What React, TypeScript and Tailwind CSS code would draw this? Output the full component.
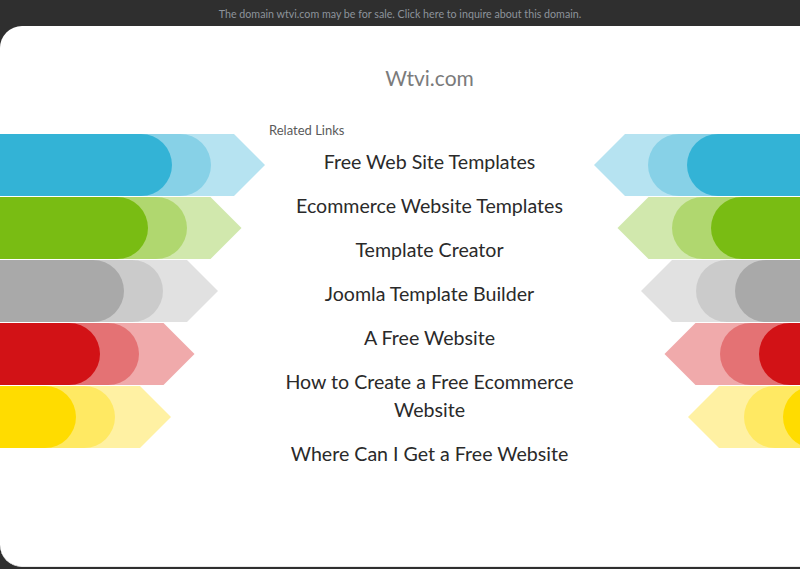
import React from "react";

type Band = { dark: string; mid: string; light: string };

const bands: Band[] = [
  { dark: "#33b3d6", mid: "#87d1e7", light: "#b6e3f1" },
  { dark: "#79bc13", mid: "#b0d76f", light: "#d1e8ad" },
  { dark: "#a9a9a9", mid: "#cbcbcb", light: "#e1e1e1" },
  { dark: "#d21216", mid: "#e47274", light: "#f0aaab" },
  { dark: "#ffdc00", mid: "#ffe963", light: "#fff1a3" },
];

const links = [
  "Free Web Site Templates",
  "Ecommerce Website Templates",
  "Template Creator",
  "Joomla Template Builder",
  "A Free Website",
  "How to Create a Free Ecommerce Website",
  "Where Can I Get a Free Website",
];

const H = 62;
const R = 31;

// pill ending (left side) with rounded right end at x
const pillRight = (x: number) => `M0 0 H${x - R} A${R} ${R} 0 0 1 ${x - R} ${H} H0 Z`;
// pill starting (right side) with rounded left end at x, running to w
const pillLeft = (x: number, w: number) => `M${w} 0 H${x + R} A${R} ${R} 0 0 0 ${x + R} ${H} H${w} Z`;

const LeftArrow: React.FC<{ band: Band; i: number }> = ({ band, i }) => {
  const tip = 265 - 23.5 * i;
  const mid = 211 - 24 * i;
  const dark = 172 - 24 * i;
  return (
    <svg width="265" height={H} viewBox={`0 0 265 ${H}`} className="block">
      <polygon points={`0,0 ${tip - R},0 ${tip},${R} ${tip - R},${H} 0,${H}`} fill={band.light} />
      <path d={pillRight(mid)} fill={band.mid} />
      <path d={pillRight(dark)} fill={band.dark} />
    </svg>
  );
};

const RightArrow: React.FC<{ band: Band; i: number }> = ({ band, i }) => {
  const w = 206;
  const tip = 23.5 * i;
  const mid = 54 + 24 * i;
  const dark = 93 + 24 * i;
  return (
    <svg width={w} height={H} viewBox={`0 0 ${w} ${H}`} className="block">
      <polygon points={`${w},0 ${tip + R},0 ${tip},${R} ${tip + R},${H} ${w},${H}`} fill={band.light} />
      <path d={pillLeft(mid, w)} fill={band.mid} />
      <path d={pillLeft(dark, w)} fill={band.dark} />
    </svg>
  );
};

export default function App() {
  return (
    <div
      className="w-[800px] h-[569px] bg-[#2f2f2f] flex flex-col overflow-hidden"
      style={{ fontFamily: "Lato, 'Open Sans', sans-serif" }}
    >
      {/* sale banner */}
      <div className="h-[26px] shrink-0 flex items-center justify-center text-[10.7px] text-[#8d939b] pt-[2px]">
        The domain wtvi.com may be for sale. Click here to inquire about this domain.
      </div>

      {/* main card */}
      <div className="h-[541px] bg-white rounded-l-[22px] flex overflow-hidden border-b border-[#e8e8e8]">
        {/* left arrows */}
        <div className="w-[265px] shrink-0 pt-[108px] flex flex-col gap-px">
          {bands.map((b, i) => (
            <LeftArrow key={i} band={b} i={i} />
          ))}
        </div>

        {/* center content */}
        <div className="flex-1 flex flex-col pt-[38px]">
          <h1 className="h-[28px] leading-[28px] text-[21px] text-[#7b7b7b] text-center font-normal">Wtvi.com</h1>
          <div className="mt-[30px] pl-[4px] text-[13px] leading-[16px] text-[#5a5a5a]">Related Links</div>
          <ul className="mt-[10px] flex flex-col items-center gap-[16px]">
            {links.map((l) => (
              <li key={l} className="max-w-[300px] text-center text-[19.6px] leading-[28px] text-[#2a2a2a]">
                <a href="#">{l}</a>
              </li>
            ))}
          </ul>
        </div>

        {/* right arrows */}
        <div className="w-[206px] shrink-0 pt-[108px] flex flex-col gap-px">
          {bands.map((b, i) => (
            <RightArrow key={i} band={b} i={i} />
          ))}
        </div>
      </div>
    </div>
  );
}
